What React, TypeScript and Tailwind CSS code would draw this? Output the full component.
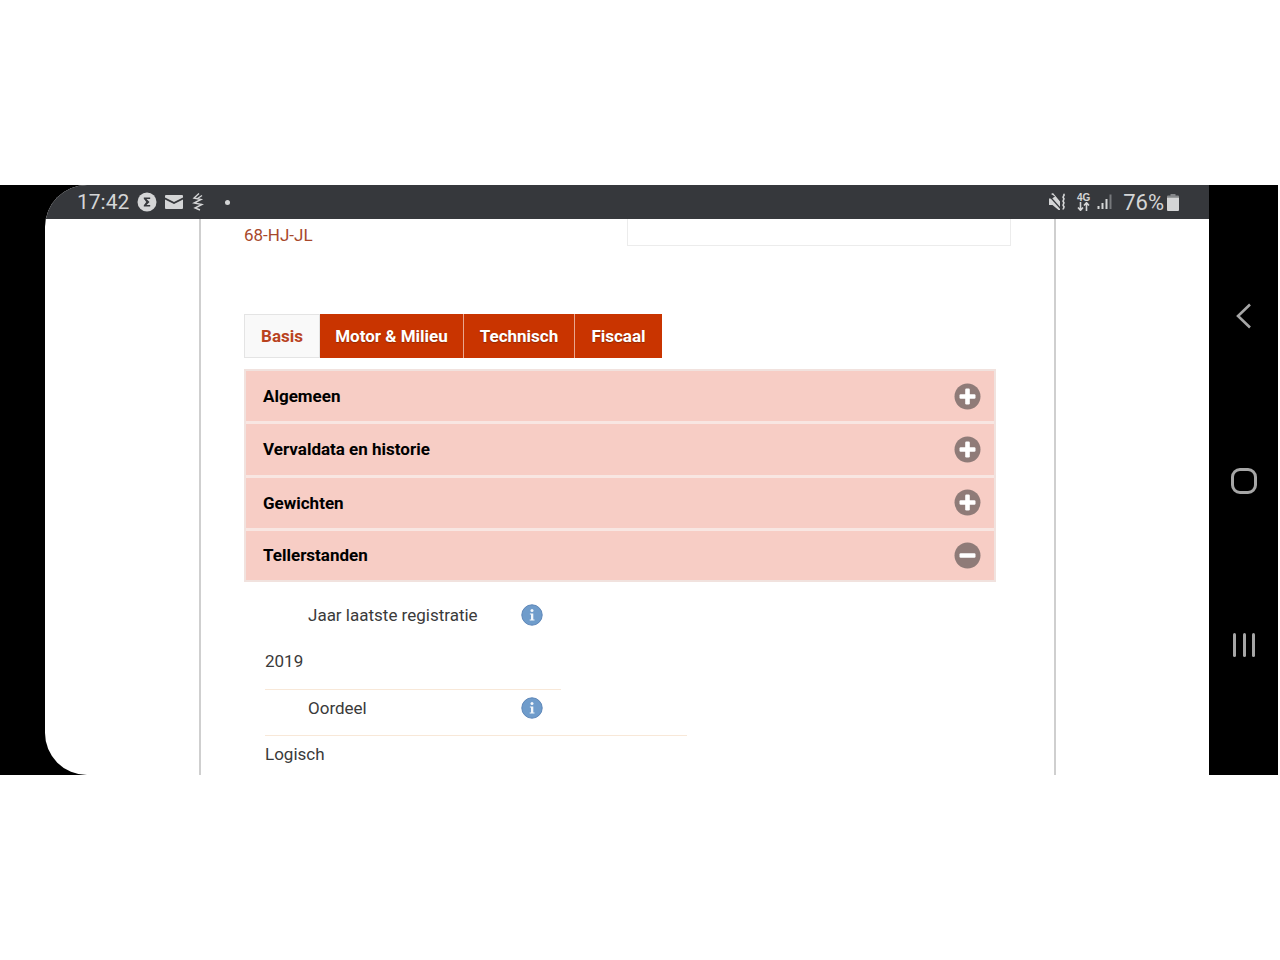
const font = { fontFamily: '"Liberation Sans", Arial, sans-serif' };
const roboto = { fontFamily: 'Roboto, sans-serif' };

const RoundIcon = ({ open }: { open?: boolean }) => (
  <svg width="27" height="27" viewBox="0 0 27 27" className="shrink-0">
    <circle cx="13.5" cy="13.5" r="13" fill="#8f7b78" />
    <rect x="5.5" y="11.2" width="16" height="4.6" rx="1.2" fill="#fff" />
    {!open && <rect x="11.2" y="5.5" width="4.6" height="16" rx="1.2" fill="#fff" />}
  </svg>
);

const InfoIcon = () => (
  <svg width="22" height="22" viewBox="0 0 22 22" className="shrink-0">
    <circle cx="11" cy="11" r="10.2" fill="#6f9ccb" stroke="#5d86b8" strokeWidth="1" />
    <circle cx="11" cy="6.6" r="1.5" fill="#f3f7fb" />
    <path d="M8.9 9.4h3.4v6h1.2v1.2H8.7v-1.2h1.3v-4.8H8.9z" fill="#f3f7fb" />
  </svg>
);

const StatusLeft = () => (
  <div className="flex items-center text-[#d4d5d6]">
    <span className="mt-[1px] w-[60px] text-[21px] leading-none" style={roboto}>17:42</span>
    <svg width="20" height="20" viewBox="0 0 20 20">
      <circle cx="10" cy="10" r="9.5" fill="#d4d5d6" />
      <path d="M6.800 5.500h6.400v1.500H9.500l3 3-3 3h3.700v1.500H6.800v-1.300L9.300 10 6.800 6.800z" fill="#36383c" />
    </svg>
    <svg width="18" height="14" viewBox="0 0 18 14" className="ml-[8px]">
      <path d="M0 1A1 1 0 0 1 1 0h16a1 1 0 0 1 1 1v1.500L9 7 0 2.500z" fill="#d4d5d6" />
      <path d="M0 4.500 9 9l9-4.500V13a1 1 0 0 1-1 1H1a1 1 0 0 1-1-1z" fill="#d4d5d6" />
    </svg>
    <svg width="12" height="18" viewBox="0 0 12 18" className="ml-[9px]" fill="none" stroke="#d4d5d6" strokeWidth="1.400">
      <path d="M7 0.500 2 5l7 1.500-7 3.500 8 1.500-7 3.500 5 2" />
      <path d="M10 2.500 5.500 5.500" />
    </svg>
    <span className="ml-[21px] size-[5px] rounded-full bg-[#d4d5d6]" />
  </div>
);

const StatusRight = () => (
  <div className="flex items-center text-[#d4d5d6]">
    <svg width="19" height="18" viewBox="0 0 19 18">
      <path d="M1 5.500h3L7 3.500 3 1l2-1 7 8.500V17H10.500L4.500 12H1z" fill="#d4d5d6" />
      <path d="M0 1.500 13 16" stroke="#36383c" strokeWidth="1.200" />
      <path d="M15.500 1c2 1.500-1.800 2.500 0 4s-1.800 2.500 0 4-1.800 2.500 0 4-1 2 0 3.500" stroke="#d4d5d6" strokeWidth="1.700" fill="none" />
    </svg>
    <div className="ml-[10px] flex w-[13px] flex-col items-center">
      <span className="text-[10px] font-bold leading-[9px]" style={font}>4G</span>
      <svg width="13" height="9" viewBox="0 0 13 9" fill="none" stroke="#d4d5d6" strokeWidth="1.600">
        <path d="M3.500 0v8M1 5.500l2.500 2.800L6 5.500M9.500 9V1M7 3.500l2.500-2.800L12 3.500" />
      </svg>
    </div>
    <svg width="16" height="16" viewBox="0 0 16 16" className="ml-[7px]">
      <rect x="0.500" y="12" width="2" height="3" fill="#d4d5d6" />
      <rect x="4.500" y="9" width="2" height="6" fill="#d4d5d6" />
      <rect x="8.500" y="5" width="2" height="10" fill="#d4d5d6" />
      <rect x="12.500" y="0.500" width="2" height="14.500" fill="#77797c" />
    </svg>
    <span className="ml-[10px] mt-[1px] text-[22px] leading-none" style={roboto}>76%</span>
    <svg width="12" height="17" viewBox="0 0 12 17" className="ml-[3px]">
      <path d="M3.500 0h5v1.500H11a1 1 0 0 1 1 1v1H0v-1a1 1 0 0 1 1-1h2.500z" fill="#85878a" />
      <path d="M0 3.500h12V16a1 1 0 0 1-1 1H1a1 1 0 0 1-1-1z" fill="#d4d5d6" />
    </svg>
  </div>
);

const tabs = [
  { label: 'Motor & Milieu', width: 'w-[144px]' },
  { label: 'Technisch', width: 'w-[111px]' },
  { label: 'Fiscaal', width: 'w-[87px]' },
];

const rows = ['Algemeen', 'Vervaldata en historie', 'Gewichten', 'Tellerstanden'];

export default function App() {
  return (
    <div className="h-[960px] w-full bg-white pt-[185px]" style={font}>
      <div className="flex h-[590px] w-[1278px] bg-black">
        <div className="w-[45px] shrink-0" />
        <div className="flex w-[1164px] shrink-0 flex-col overflow-hidden rounded-l-[42px] bg-white">
          <div className="flex h-[34px] shrink-0 items-center justify-between bg-[#36383c] pl-[32px] pr-[30px]">
            <StatusLeft />
            <StatusRight />
          </div>
          <div className="ml-[154px] flex h-[556px] w-[857px] flex-col border-x-2 border-[#cfcfcf] pl-[43px] pr-[43px]">
            <div className="flex h-[27px] shrink-0 items-start justify-between">
              <span className="mt-[5px] text-[17px] leading-[22px] text-[#a8482b]" style={roboto}>68-HJ-JL</span>
              <div className="h-[27px] w-[384px] border-x border-b border-[#ececec]" />
            </div>

            <div className="mt-[68px] flex h-[44px] text-[17px] font-bold" style={roboto}>
              <div className="flex w-[76px] items-center justify-center border border-[#e4e4e4] bg-[#f9f9f9] pt-[2px] text-[#b9431f]">Basis</div>
              {tabs.map((tab) => (
                <div key={tab.label} className={`flex ${tab.width} items-center justify-center border-r border-[#e9a68f] bg-[#c93400] pt-[1px] text-white [text-shadow:0_1px_1px_rgba(90,30,0,0.5)] last:border-r-0`}>
                  {tab.label}
                </div>
              ))}
            </div>

            <div className="mt-[11px] w-[752px] shrink-0 border-2 border-[#f1e2de] bg-[#f6e7e3]">
              {rows.map((row, i) => (
                <div key={row} className="flex h-[53.33px] items-center justify-between border-b-[3px] border-[#f8e6e2] bg-[#f7cdc5] pl-[17px] pr-[13px] text-[17px] font-bold text-black last:h-[49.5px] last:border-b-0" style={roboto}>
                  <span className="pt-[1px]">{row}</span>
                  <RoundIcon open={i === 3} />
                </div>
              ))}
            </div>

            <div className="text-[17px] text-[#3a3a3a]" style={roboto}>
              <div className="mt-[22px] flex h-[22px] items-center pl-[64px]">
                <span className="w-[213px]">Jaar laatste registratie</span>
                <InfoIcon />
              </div>
              <div className="ml-[21px] mt-[24px] h-[40px] w-[296px] border-b border-[#f8e8d8] leading-[22px]">2019</div>
              <div className="mt-[7px] flex h-[22px] items-center pl-[64px]">
                <span className="w-[213px]">Oordeel</span>
                <InfoIcon />
              </div>
              <div className="ml-[21px] mt-[16px] w-[422px] border-t border-[#f8e8d8] pt-[7px] leading-[22px]">Logisch</div>
            </div>
          </div>
        </div>

        <div className="flex flex-1 flex-col items-center pl-[1px] pt-[118px]">
          <svg width="16" height="26" viewBox="0 0 16 26" fill="none" stroke="#a6a6a6" strokeWidth="2.600">
            <path d="M14 1.500 2 13l12 11.500" />
          </svg>
          <div className="mt-[139px] h-[26px] w-[26px] rounded-[9px] border-[3px] border-[#a6a6a6]" />
          <div className="mt-[139px] flex gap-[6.500px]">
            <span className="h-[24px] w-[3px] rounded-sm bg-[#a6a6a6]" />
            <span className="h-[24px] w-[3px] rounded-sm bg-[#a6a6a6]" />
            <span className="h-[24px] w-[3px] rounded-sm bg-[#a6a6a6]" />
          </div>
        </div>
      </div>
    </div>
  );
}
